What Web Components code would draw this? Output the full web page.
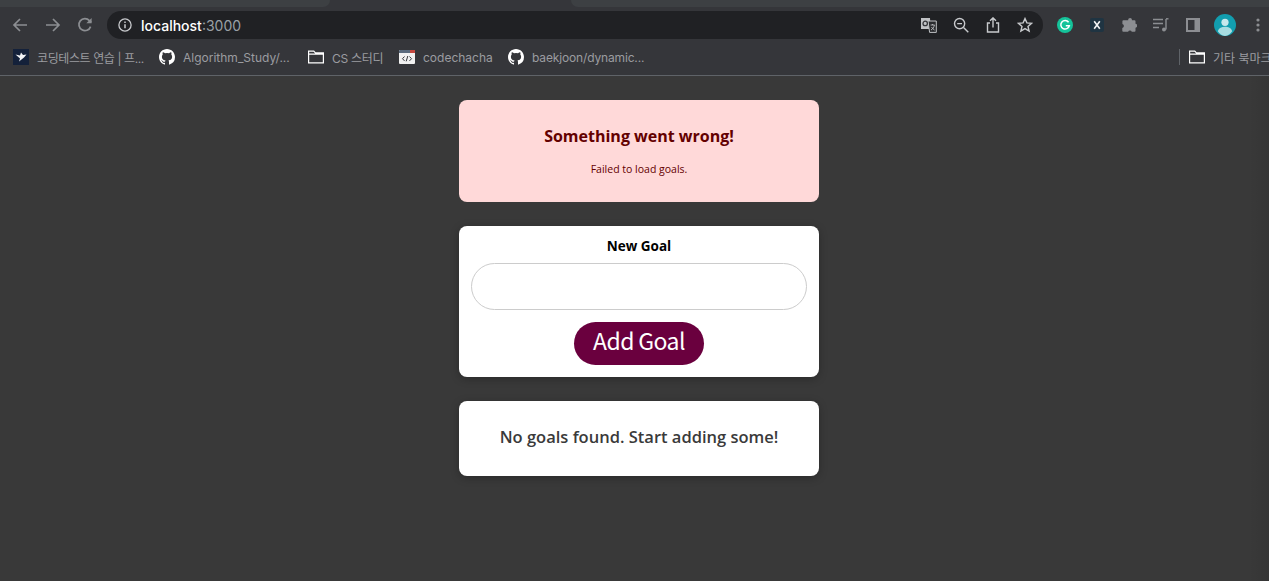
<!DOCTYPE html>
<html lang="en">
<head>
  <meta charset="UTF-8">
  <meta name="viewport" content="width=device-width, initial-scale=1.0">
  <title>goals</title>
  <style>
    html, body { margin: 0; height: 100%; background: #393939; overflow: hidden; }
    body { display: flex; flex-direction: column; font-family: "Open Sans", "Noto Sans", sans-serif; }
  </style>
</head>
<body>
  <template id="browser-chrome">
    <style>
      :host { display: block; flex: none; background: #35363a; font-family: Inter, Roboto, "Noto Sans CJK KR", sans-serif; }
      .strip { display: flex; height: 11px; }
      .strip div { height: 7px; background: #3d4043; }
      .strip .t1 { width: 330px; border-radius: 0 0 8px 0; }
      .strip .gap { flex: 0 0 241px; background: none; }
      .strip .t2 { flex: 1; border-radius: 0 0 0 8px; }
      .bar { display: flex; align-items: center; height: 28px; padding: 0 0 3px 4px; }
      .nav { display: flex; flex: none; width: 103px; }
      .box { display: flex; flex: none; align-items: center; box-sizing: border-box; width: 936px; height: 28px; padding-right: 2px; background: #202124; border-radius: 14px; font-size: 14px; }
      .addr { flex: 1; color: #fff; font-weight: 500; }
      .addr span { color: #9aa0a6; font-weight: 400; }
      .marks { display: flex; align-items: center; box-sizing: border-box; height: 34px; padding: 0 0 3px 13px; border-bottom: 1px solid #5f6368; overflow: hidden; }
      .other { display: flex; margin-left: auto; align-items: center; }
      .sep { width: 1px; height: 16px; background: #5f6368; margin-right: 9px; }
    </style>
    <div class="strip"><div class="t1"></div><div class="gap"></div><div class="t2"></div></div>
    <div class="bar">
      <div class="nav"><slot name="nav"></slot></div>
      <div class="box">
        <slot name="info"></slot>
        <div class="addr">localhost<span>:3000</span></div>
        <slot name="actions"></slot>
      </div>
      <slot name="ext"></slot>
    </div>
    <div class="marks">
      <slot name="marks"></slot>
      <div class="other"><div class="sep"></div><slot name="other"></slot></div>
    </div>
  </template>

  <template id="tool-icon">
    <style>
      :host { display: flex; align-items: center; justify-content: center; flex: none; width: 32px; height: 28px; }
      ::slotted(svg) { display: block; }
    </style>
    <slot></slot>
  </template>

  <template id="bookmark-item">
    <style>
      :host { display: flex; align-items: center; flex: none; gap: 8px; font-size: 12px; color: #9b9ca0; white-space: nowrap; }
      .ic { display: flex; width: 16px; height: 16px; }
    </style>
    <div class="ic"><slot name="icon"></slot></div>
    <div class="tx"><slot></slot></div>
  </template>

  <template id="goals-page">
    <style>
      :host { display: flex; flex-direction: column; align-items: center; gap: 24px; flex: 1; padding: 24px 0 0 9px; position: relative; }
      :host::after { content: ""; position: absolute; top: 0; right: 0; bottom: 0; width: 20px; background: linear-gradient(to right, rgba(0,0,0,0), rgba(0,0,0,.07)); }
    </style>
    <slot></slot>
  </template>

  <template id="error-box">
    <style>
      :host { display: block; box-sizing: border-box; width: 360px; height: 102px; padding-top: 24px; background: #ffd9d9; border-radius: 8px; text-align: center; color: #630000; }
      h2 { margin: 0; font-size: 16px; line-height: 24px; font-weight: 700; }
      p { margin: 13px 0 0; font-size: 10.5px; line-height: 16px; }
    </style>
    <h2><slot name="title"></slot></h2>
    <p><slot></slot></p>
  </template>

  <template id="goal-form">
    <style>
      :host { display: block; box-sizing: border-box; width: 360px; height: 151px; padding: 10px 12px 0; background: #fff; border-radius: 8px; box-shadow: 0 2px 8px rgba(0,0,0,.26); text-align: center; }
      label { display: block; font-size: 13.5px; line-height: 20px; font-weight: 700; color: #000; margin-bottom: 7px; }
      input { display: block; box-sizing: border-box; width: 100%; height: 47px; border: 1px solid #ccc; border-radius: 24px; outline: none; background: #fff; }
      button { display: block; width: 130px; height: 43px; margin: 12px auto 0; padding: 0 0 6px; border: 0; border-radius: 22px; background: #6a003e; color: #fff; font: 400 23px/37px "Noto Sans CJK KR", "Noto Sans", sans-serif; letter-spacing: -.6px; }
    </style>
    <label for="goal"><slot name="label"></slot></label>
    <input id="goal" type="text">
    <button type="button"><slot></slot></button>
  </template>

  <template id="goal-empty">
    <style>
      :host { display: flex; align-items: center; justify-content: center; box-sizing: border-box; width: 360px; height: 75px; padding-bottom: 4px; background: #fff; border-radius: 8px; box-shadow: 0 2px 8px rgba(0,0,0,.26); font-size: 16.5px; font-weight: 600; color: #3a3a3a; }
    </style>
    <slot></slot>
  </template>

  <svg width="0" height="0" style="position:absolute">
    <defs>
      <path id="gh" fill="#fff" d="M8 0C3.58 0 0 3.58 0 8c0 3.54 2.29 6.53 5.47 7.59.4.07.55-.17.55-.38v-1.34c-2.23.48-2.7-1.07-2.7-1.07-.36-.93-.89-1.17-.89-1.17-.73-.5.05-.49.05-.49.8.06 1.23.83 1.23.83.71 1.22 1.87.87 2.33.66.07-.52.28-.87.51-1.07-1.78-.2-3.64-.89-3.64-3.95 0-.87.31-1.59.82-2.15-.08-.2-.36-1.02.08-2.12 0 0 .67-.21 2.2.82a7.6 7.6 0 0 1 4 0c1.53-1.04 2.2-.82 2.2-.82.44 1.1.16 1.92.08 2.12.51.56.82 1.27.82 2.15 0 3.07-1.87 3.75-3.65 3.95.29.25.54.73.54 1.48v2.2c0 .21.15.46.55.38A8 8 0 0 0 16 8c0-4.42-3.58-8-8-8z"/>
      <path id="fd" fill="none" stroke="#fff" stroke-width="1.2" d="M.6 2.100h5.200l1.600 1.700h8v10H.6z M.6 5.100h14.800"/>
    </defs>
  </svg>

  <browser-chrome>
    <tool-icon slot="nav"><svg width="16" height="16" viewBox="0 0 16 16" fill="none" stroke="#8c8e92" stroke-width="1.7"><path d="M15 8H2M8 2 2 8l6 6"/></svg></tool-icon>
    <tool-icon slot="nav" style="margin-left:1px"><svg width="16" height="16" viewBox="0 0 16 16" fill="none" stroke="#8c8e92" stroke-width="1.7"><path d="M1 8h13M8 2l6 6-6 6"/></svg></tool-icon>
    <tool-icon slot="nav"><svg width="16" height="16" viewBox="0 0 16 16" fill="none" stroke="#8c8e92" stroke-width="1.7"><path d="M13.600 9.600A6 6 0 1 1 12.400 3.600L14.200 5.400"/><path d="M14.600 1v5.200H9.400" fill="#8c8e92" stroke="none"/></svg></tool-icon>

    <tool-icon slot="info" style="margin-left:2px"><svg width="14" height="14" viewBox="0 0 14 14" fill="none"><circle cx="7" cy="7" r="6.100" stroke="#c8cacd" stroke-width="1.300"/><path d="M7 6.200v4M7 3.500v1.500" stroke="#c8cacd" stroke-width="1.500"/></svg></tool-icon>

    <tool-icon slot="actions"><svg width="16" height="16" viewBox="0 0 16 16"><path d="M0 1h9l.8 11H0z" fill="#bfc1c4"/><path d="M7 4h8.300v11.400H8.600z" fill="#2a2b2e" stroke="#bfc1c4" stroke-width="1"/><circle cx="4.200" cy="6.400" r="2.200" fill="none" stroke="#35363a" stroke-width="1.300"/><path d="M9.600 8h4M11.600 7v1M10 13c2-1 3-3 3.400-5M10.500 10c.6 1.200 1.600 2.200 3 3" fill="none" stroke="#bfc1c4" stroke-width=".9"/></svg></tool-icon>
    <tool-icon slot="actions"><svg width="16" height="16" viewBox="0 0 16 16" fill="none" stroke="#c8cacd" stroke-width="1.400"><circle cx="6.600" cy="6.600" r="5.100"/><path d="M10.500 10.500l4.800 4.800M4.200 6.600h4.800"/></svg></tool-icon>
    <tool-icon slot="actions"><svg width="16" height="16" viewBox="0 0 16 16" fill="none" stroke="#c8cacd" stroke-width="1.400"><path d="M5 6H2.500v9h11V6H11"/><path d="M8 10.500V1M5 3.800 8 .9l3 2.900"/></svg></tool-icon>
    <tool-icon slot="actions"><svg width="16" height="16" viewBox="0 0 16 16" fill="none" stroke="#c8cacd" stroke-width="1.400"><path d="M8 1.600l1.900 4.300 4.700.4-3.600 3.100 1.100 4.600L8 11.600 3.900 14l1.100-4.600-3.600-3.100 4.700-.4z"/></svg></tool-icon>

    <tool-icon slot="ext" style="margin-left:6px"><svg width="16" height="16" viewBox="0 0 16 16"><circle cx="8" cy="8" r="8" fill="#15c39a"/><path d="M11.600 5.200A4.300 4.300 0 1 0 12.300 8.800H8.800" fill="none" stroke="#fff" stroke-width="1.500"/></svg></tool-icon>
    <tool-icon slot="ext"><svg width="14" height="14" viewBox="0 0 14 14"><rect width="14" height="14" rx="2" fill="#1f3442"/><path d="M4.200 3.300 9.800 10.700M9.800 3.300 4.200 10.700" stroke="#f3f4f5" stroke-width="1.600"/></svg></tool-icon>
    <tool-icon slot="ext"><svg width="16" height="16" viewBox="0 0 16 16"><path fill="#8c8e92" d="M5.200 3.200h2A2 2 0 0 1 9.100.9a2 2 0 0 1 1.800 2.300h2.600a1 1 0 0 1 1 1v2.600a2 2 0 0 1 .2 3.900 2 2 0 0 1-.2.100v2.900a1 1 0 0 1-1 1h-2.700a2 2 0 0 0-3.700 0H2.300a1 1 0 0 1-1-1V11a2 2 0 0 0 .1-3.900V4.200a1 1 0 0 1 1-1z"/></svg></tool-icon>
    <tool-icon slot="ext"><svg width="16" height="16" viewBox="0 0 16 16" fill="none" stroke="#8c8e92" stroke-width="1.400"><path d="M0 2.500h10M0 6.500h10M0 10.500h6M13 2v10.500"/><circle cx="11" cy="12.500" r="2" fill="#8c8e92" stroke="none"/><path d="M13 1.800h2.500"/></svg></tool-icon>
    <tool-icon slot="ext"><svg width="14" height="14" viewBox="0 0 14 14"><path fill="#8c8e92" fill-rule="evenodd" d="M0 0h14v14H0zM2 2v10h6.500V2z"/></svg></tool-icon>
    <tool-icon slot="ext"><svg width="22" height="22" viewBox="0 0 22 22"><circle cx="11" cy="11" r="11" fill="#129eaf"/><circle cx="11" cy="8.300" r="3.600" fill="#c8e9ec"/><path d="M3.800 17.200c1-3.200 4-4.400 7.200-4.400s6.200 1.200 7.200 4.400A10.500 10.500 0 0 1 11 22a10.500 10.500 0 0 1-7.200-4.800z" fill="#a8dde1"/></svg></tool-icon>
    <tool-icon slot="ext" style="margin-left:1px"><svg width="4" height="14" viewBox="0 0 4 14" fill="#8c8e92"><circle cx="2" cy="2" r="1.600"/><circle cx="2" cy="7" r="1.600"/><circle cx="2" cy="12" r="1.600"/></svg></tool-icon>

    <bookmark-item slot="marks" style="width:130px;margin-right:16px;letter-spacing:-.4px">
      <svg slot="icon" width="16" height="16" viewBox="0 0 16 16"><rect width="16" height="16" fill="#14213a"/><path d="M2.500 5.500 7 6.500 8 3.500l2 2.500 3.500-.5L11 8.500 6 12.500 7 9.500z" fill="#f2f4f6"/></svg>
      코딩테스트 연습 | 프...
    </bookmark-item>
    <bookmark-item slot="marks" style="width:133px;margin-right:16px">
      <svg slot="icon" width="16" height="16" viewBox="0 0 16 16"><use href="#gh"/></svg>
      Algorithm_Study/...
    </bookmark-item>
    <bookmark-item slot="marks" style="width:75px;margin-right:16px;letter-spacing:-.3px">
      <svg slot="icon" width="16" height="16" viewBox="0 0 16 16"><use href="#fd"/></svg>
      CS 스터디
    </bookmark-item>
    <bookmark-item slot="marks" style="width:93px;margin-right:16px">
      <svg slot="icon" width="16" height="16" viewBox="0 0 16 16"><rect y="1" width="16" height="14" rx="1" fill="#f1f1f1"/><path d="M0 2a1 1 0 0 1 1-1h14a1 1 0 0 1 1 1v2H0z" fill="#5a6a7d"/><path d="M11 1h5v3h-5z" fill="#c5483f"/><path d="M5.500 7.500 3.500 9.700l2 2.200M10.500 7.500l2 2.200-2 2.200M8.800 7 7.200 12.300" fill="none" stroke="#33353a" stroke-width="1"/></svg>
      codechacha
    </bookmark-item>
    <bookmark-item slot="marks" style="letter-spacing:-.15px">
      <svg slot="icon" width="16" height="16" viewBox="0 0 16 16"><use href="#gh"/></svg>
      baekjoon/dynamic...
    </bookmark-item>
    <bookmark-item slot="other" style="width:80px">
      <svg slot="icon" width="16" height="16" viewBox="0 0 16 16"><use href="#fd"/></svg>
      기타 북마크
    </bookmark-item>
  </browser-chrome>

  <goals-page>
    <error-box>
      <span slot="title">Something went wrong!</span>
      Failed to load goals.
    </error-box>
    <goal-form>
      <span slot="label">New Goal</span>
      Add Goal
    </goal-form>
    <goal-empty>No goals found. Start adding some!</goal-empty>
  </goals-page>

  <script>
    // every element just clones its template of the same name
    const names = ['browser-chrome', 'tool-icon', 'bookmark-item', 'goals-page', 'error-box', 'goal-form', 'goal-empty']
    names.forEach(name => {
      customElements.define(name, class extends HTMLElement {
        constructor() {
          super()
          const shadowRoot = this.attachShadow({ mode: 'open' })
          shadowRoot.appendChild(document.querySelector('#' + name).content.cloneNode(true))
        }
      })
    })
  </script>
</body>
</html>
